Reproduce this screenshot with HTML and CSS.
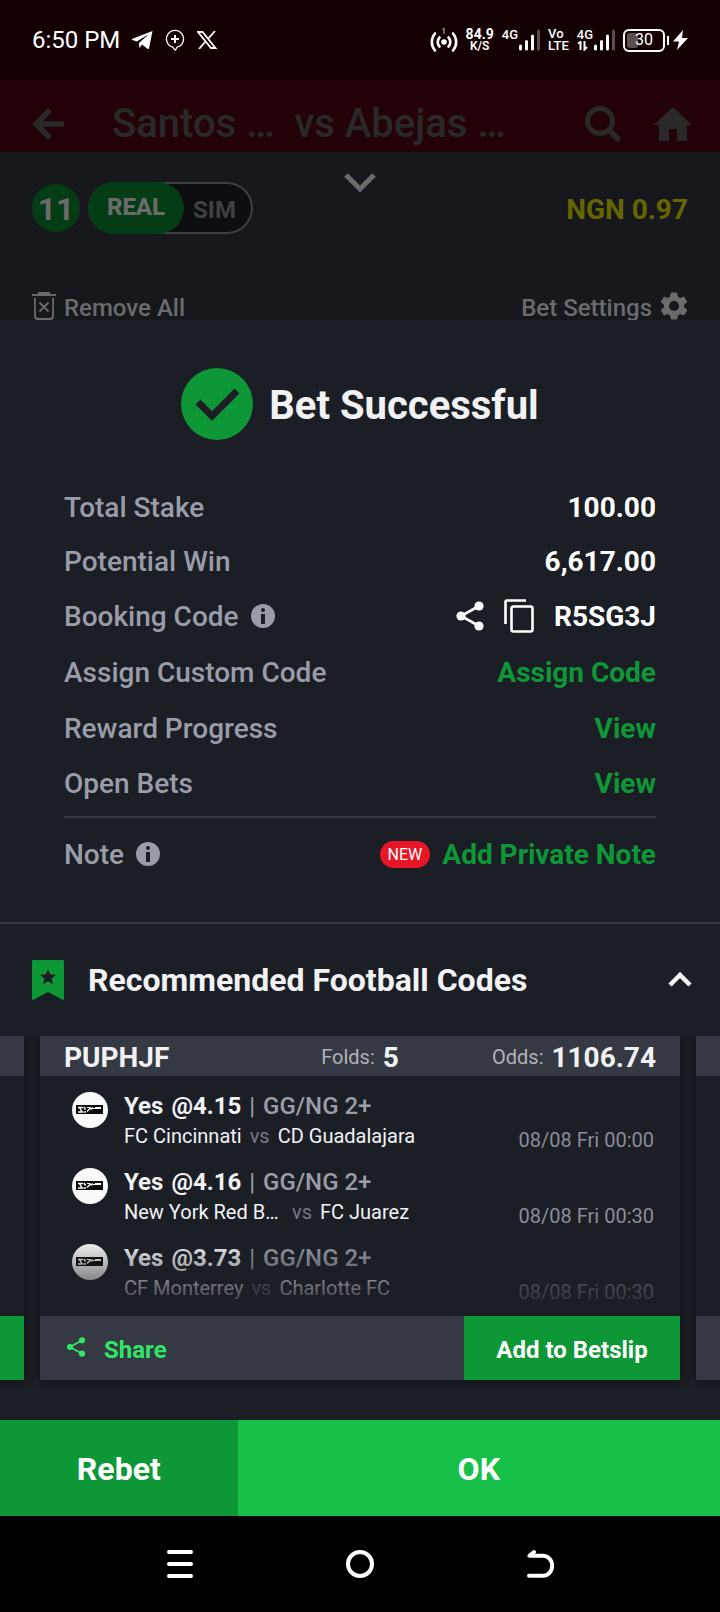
FILE: index.html
```
<!DOCTYPE html>
<html lang="en">
<head>
  <meta charset="UTF-8" />
  <meta name="viewport" content="width=device-width, initial-scale=1" />
  <title>Bet Successful</title>
  <link rel="stylesheet" href="styles.css">
</head>
<body>

<!-- shared icons -->
<svg class="sprite" aria-hidden="true">
  <symbol id="icon-share" viewBox="0 0 28 30">
    <path d="M23 5 5 15l18 10" fill="none" stroke="currentColor" stroke-width="2.6"/>
    <circle cx="23" cy="5" r="4.6" fill="currentColor"/>
    <circle cx="5" cy="15" r="4.6" fill="currentColor"/>
    <circle cx="23" cy="25" r="4.6" fill="currentColor"/>
  </symbol>
  <symbol id="icon-info" viewBox="0 0 24 24">
    <circle cx="12" cy="12" r="12" fill="currentColor"/>
    <circle cx="12" cy="6" r="2" fill="#1c1e26"/>
    <path d="M10 10h4v10h-4z" fill="#1c1e26"/>
  </symbol>
  <symbol id="icon-league" viewBox="0 0 36 36">
    <circle cx="18" cy="18" r="18" fill="#fafafa"/>
    <path d="M4 13h27v9H4z" fill="#0a0a0a"/>
    <path d="M6 15.500h5M6 20h5.500M7.500 15.500l2.500 4.500M12 15l1.500 2.500M15 19.500l4-4M12 20h2M19 17.500l2-2" fill="none" stroke="#fafafa" stroke-width="1.500"/>
    <path d="M15 15.500h3M21 16.500h8M23 15.500h6" fill="none" stroke="#fafafa" stroke-width="1.200"/>
  </symbol>
  <symbol id="icon-signal" viewBox="0 0 22 22">
    <path d="M2.500 17v3M8.500 12.500v7.500M14.500 7v13" stroke="#fff" stroke-width="3" stroke-linecap="round"/>
    <path d="M20.500 2v18" stroke="#5c4f50" stroke-width="3" stroke-linecap="round"/>
  </symbol>
</svg>

<div class="status">
  <div class="status-left">
    <span class="clock">6:50 PM</span>
    <svg width="21" height="18" viewBox="0 0 21 18"><path d="M20.500 0 17 17.500c-.3.700-1 .7-1.600.3L10 13.600l-2.600 3.600-.4-5.200L17 3 4.800 10.500.4 9c-.7-.3-.6-1 .1-1.300z" fill="#fff"/></svg>
    <svg width="20" height="22" viewBox="0 0 20 22"><path d="M8 18.200A8.500 8.500 0 1 1 12 18.200L10.500 21c-.8-.3-1.800-1.300-2.500-2.800z" fill="none" stroke="#fff" stroke-width="1.300"/><path d="M10 6v8M6 10h8" stroke="#fff" stroke-width="2"/></svg>
    <svg width="20" height="18" viewBox="0 0 20 18"><path d="M1 1h4.500L18.500 17H14z" fill="none" stroke="#fff" stroke-width="1.800"/><path d="M18 0 11 8M8.500 10.500 2 18" stroke="#fff" stroke-width="1.800"/></svg>
  </div>
  <div class="status-right">
    <svg width="28" height="26" viewBox="0 0 28 26">
      <circle cx="14" cy="15" r="2.800" fill="#fff"/>
      <path d="M9.500 10.500a6.500 6.500 0 0 0 0 9M18.500 10.500a6.500 6.500 0 0 1 0 9M5 6.500a13 13 0 0 0 0 17M23 6.500a13 13 0 0 1 0 17" fill="none" stroke="#fff" stroke-width="2.600" stroke-linecap="round"/>
      <path d="M12.500 2.500 14 1.500v5.500" fill="none" stroke="#a39a9b" stroke-width="1.200"/>
    </svg>
    <span class="stack"><b>84.9</b><small>K/S</small></span>
    <span class="cell"><span class="gen">4G</span><svg width="22" height="22"><use href="#icon-signal"/></svg></span>
    <span class="stack volte"><span>Vo</span><span>LTE</span></span>
    <span class="cell"><span class="gen">4G<svg width="12" height="10" viewBox="0 0 12 10"><path d="M1 2.500 3.500 1v8M7.500 0v8.500L10 6" fill="none" stroke="#fff" stroke-width="2"/></svg></span><svg width="22" height="22"><use href="#icon-signal"/></svg></span>
    <span class="battery"><span class="battery-level"></span><span class="battery-text">30</span></span>
    <svg width="15" height="20" viewBox="0 0 15 20"><path d="M10 0 0 11.500h6L4 20 15 8H9z" fill="#fff"/></svg>
  </div>
</div>

<header class="match-bar">
  <button class="icon-btn" aria-label="Back">
    <svg width="32" height="32" viewBox="0 0 32 32"><path d="M18 2 4 16l14 14M4 16h28" fill="none" stroke="currentColor" stroke-width="5.500"/></svg>
  </button>
  <h1 class="match-title"><span>Santos …</span><span>vs Abejas …</span></h1>
  <button class="icon-btn" aria-label="Search">
    <svg width="38" height="36" viewBox="0 0 38 36"><circle cx="16" cy="15" r="12.500" fill="none" stroke="currentColor" stroke-width="5"/><path d="m25 24 8.500 8.500" stroke="currentColor" stroke-width="6" stroke-linecap="round"/></svg>
  </button>
  <button class="icon-btn" aria-label="Home">
    <svg width="38" height="34" viewBox="0 0 38 34"><path d="M19 0 38 18h-5v16H23V22h-8v12H5V18H0z" fill="currentColor"/></svg>
  </button>
</header>

<section class="slip">
  <button class="slip-close" aria-label="Close betslip">
    <svg width="32" height="20" viewBox="0 0 32 20"><path d="m2 2 14 14L30 2" fill="none" stroke="currentColor" stroke-width="5"/></svg>
  </button>
  <div class="slip-top">
    <span class="slip-count">11</span>
    <div class="mode">
      <button class="mode-real">REAL</button>
      <button class="mode-sim">SIM</button>
    </div>
    <span class="balance">NGN 0.97</span>
  </div>
  <div class="slip-tools">
    <button class="tool">
      <svg width="24" height="28" viewBox="0 0 24 28"><path d="M6 0h12v2h6v2H0V2h6z" fill="currentColor"/><path d="M3 6v18q0 3 3 3h12q3 0 3-3V6M7.500 10.500l9 9M16.500 10.500l-9 9" fill="none" stroke="currentColor" stroke-width="1.800"/></svg>
      Remove All
    </button>
    <button class="tool">
      Bet Settings
      <svg width="28" height="28" viewBox="2.200 2 19.600 20"><path fill="currentColor" d="M19.140 12.940c.04-.3.060-.61.060-.94 0-.32-.02-.64-.07-.94l2.030-1.580c.18-.14.23-.41.120-.61l-1.920-3.320c-.12-.22-.37-.29-.59-.22l-2.390.96c-.5-.38-1.030-.7-1.620-.94L14.400 2.810c-.04-.24-.24-.41-.48-.41h-3.840c-.24 0-.43.170-.47.410l-.36 2.540c-.59.240-1.130.570-1.620.940l-2.390-.96c-.22-.08-.47 0-.59.220L2.740 8.870c-.12.210-.08.470.12.610l2.030 1.580c-.05.3-.09.630-.09.940s.02.640.070.940l-2.030 1.580c-.18.140-.23.410-.12.610l1.920 3.320c.12.220.37.290.59.220l2.390-.96c.5.380 1.030.7 1.620.940l.36 2.540c.05.240.24.410.48.410h3.840c.24 0 .44-.17.470-.41l.36-2.540c.59-.24 1.130-.56 1.620-.94l2.390.96c.22.080.47 0 .59-.22l1.920-3.320c.12-.22.070-.47-.12-.61zM12 15.600a3.600 3.600 0 1 1 0-7.200 3.600 3.600 0 0 1 0 7.200z"/></svg>
    </button>
  </div>
</section>

<main class="result">
  <h2 class="result-title">
    <svg width="72" height="72" viewBox="0 0 72 72"><circle cx="36" cy="36" r="36" fill="#0e9737"/><path d="m17 34 14 14 25-25" fill="none" stroke="#1c1e26" stroke-width="7"/></svg>
    <span>Bet Successful</span>
  </h2>

  <div class="details">
    <div class="row"><span>Total Stake</span><strong>100.00</strong></div>
    <div class="row"><span>Potential Win</span><strong>6,617.00</strong></div>
    <div class="row tall">
      <span class="label">Booking Code <svg width="24" height="24"><use href="#icon-info"/></svg></span>
      <span class="code">
        <button class="icon-btn" aria-label="Share code"><svg width="28" height="30"><use href="#icon-share"/></svg></button>
        <button class="icon-btn" aria-label="Copy code"><svg width="30" height="34" viewBox="0 0 30 34"><path d="M1.500 25V3q0-1.500 1.500-1.500h19" fill="none" stroke="currentColor" stroke-width="2.600"/><rect x="7.500" y="7.500" width="21" height="25" rx="2" fill="none" stroke="currentColor" stroke-width="2.600"/></svg></button>
        <strong>R5SG3J</strong>
      </span>
    </div>
    <div class="row tall"><span>Assign Custom Code</span><a href="#assign">Assign Code</a></div>
    <div class="row tall"><span>Reward Progress</span><a href="#reward">View</a></div>
    <div class="row"><span>Open Bets</span><a href="#open-bets">View</a></div>
    <div class="row note">
      <span class="label">Note <svg width="24" height="24"><use href="#icon-info"/></svg></span>
      <span class="note-action"><span class="new">NEW</span><a href="#note">Add Private Note</a></span>
    </div>
  </div>

  <section class="codes">
    <div class="codes-head">
      <svg width="32" height="40" viewBox="0 0 32 40"><path d="M1 0h30l1 1v38l-1 1-15-8-15 8-1-1V1z" fill="#0e9737"/><path d="m16 9 2.300 5.300 5.700.5-4.300 3.800 1.300 5.600-5-3-5 3 1.300-5.600L8 14.800l5.700-.5z" fill="#1c1e26"/></svg>
      <h3>Recommended Football Codes</h3>
      <button class="icon-btn" aria-label="Collapse"><svg width="24" height="16" viewBox="0 0 24 16"><path d="m2 13 10-10 10 10" fill="none" stroke="#f2f2f5" stroke-width="4.500"/></svg></button>
    </div>

    <div class="carousel">
      <div class="card">
        <div class="card-head"></div>
        <div class="picks"></div>
        <div class="card-foot"><span class="share"></span><span class="add"></span></div>
      </div>

      <article class="card">
        <div class="card-head">
          <b>PUPHJF</b>
          <span class="stat">Folds: <b>5</b></span>
          <span class="stat">Odds: <b>1106.74</b></span>
        </div>
        <ul class="picks">
          <li class="pick">
            <svg width="36" height="36"><use href="#icon-league"/></svg>
            <div class="pick-info">
              <p class="market"><b>Yes</b> <b>@4.15</b> <i>|</i> <span>GG/NG 2+</span></p>
              <p class="teams"><span>FC Cincinnati</span><i>vs</i><span>CD Guadalajara</span></p>
            </div>
            <time>08/08 Fri 00:00</time>
          </li>
          <li class="pick">
            <svg width="36" height="36"><use href="#icon-league"/></svg>
            <div class="pick-info">
              <p class="market"><b>Yes</b> <b>@4.16</b> <i>|</i> <span>GG/NG 2+</span></p>
              <p class="teams"><span class="cut">New York Red B…</span><i>vs</i><span>FC Juarez</span></p>
            </div>
            <time>08/08 Fri 00:30</time>
          </li>
          <li class="pick">
            <svg width="36" height="36"><use href="#icon-league"/></svg>
            <div class="pick-info">
              <p class="market"><b>Yes</b> <b>@3.73</b> <i>|</i> <span>GG/NG 2+</span></p>
              <p class="teams"><span>CF Monterrey</span><i>vs</i><span>Charlotte FC</span></p>
            </div>
            <time>08/08 Fri 00:30</time>
          </li>
        </ul>
        <div class="card-foot">
          <button class="share"><svg width="20" height="20"><use href="#icon-share"/></svg>Share</button>
          <button class="add">Add to Betslip</button>
        </div>
      </article>

      <div class="card">
        <div class="card-head"></div>
        <div class="picks"></div>
        <div class="card-foot"><span class="share"></span><span class="add"></span></div>
      </div>
    </div>
  </section>
</main>

<div class="actions">
  <button class="rebet">Rebet</button>
  <button class="ok">OK</button>
</div>

<nav class="sysnav">
  <button class="icon-btn" aria-label="Recent apps"><svg width="28" height="30" viewBox="0 0 28 30"><path d="M3 3h22M3 15h22M3 27h22" stroke="#fff" stroke-width="4" stroke-linecap="round"/></svg></button>
  <button class="icon-btn" aria-label="Home screen"><svg width="28" height="30" viewBox="0 0 28 30"><circle cx="14" cy="15" r="12" fill="none" stroke="#fff" stroke-width="4"/></svg></button>
  <button class="icon-btn" aria-label="Go back"><svg width="28" height="30" viewBox="0 0 28 30"><path d="M8 3 3.500 6.800H17a9.200 10 0 0 1 0 20H3" fill="none" stroke="#fff" stroke-width="4" stroke-linecap="round" stroke-linejoin="round"/></svg></button>
</nav>

</body>
</html>
```
FILE: styles.css
```
:root {
  --bg: #1c1e26;
  --panel: #353943;
  --green: #0e9737;
  --ok: #17c149;
  --muted: #9a9ca9;
  --light: #f2f2f5;
  --dim: #6b6b6b;
  --font: Roboto, "Liberation Sans", sans-serif;
}

* {
  box-sizing: border-box;
}

body {
  font-family: var(--font);
  background: var(--bg);
  color: #fff;
  margin: 0;
}

button {
  font: inherit;
  color: inherit;
  background: none;
  border: 0;
  padding: 0;
}

a {
  text-decoration: none;
}

svg {
  display: block;
  flex: none;
}

h1, h2, h3, p, ul {
  margin: 0;
  padding: 0;
}

.sprite {
  position: absolute;
  width: 0;
  height: 0;
}

/* status bar */
.status {
  display: flex;
  justify-content: space-between;
  align-items: center;
  height: 80px;
  padding: 0 32px;
  background: #140000;
}

.status-left,
.status-right {
  display: flex;
  align-items: center;
}

.status-left {
  gap: 12px;
}

.status-right {
  gap: 8px;
}

.clock {
  font-size: 24px;
  line-height: 32px;
}

.stack {
  display: flex;
  flex-direction: column;
  align-items: center;
  font-size: 13px;
  line-height: 12px;
  font-weight: 500;
}

.stack b {
  font-size: 14px;
  font-weight: 700;
}

.stack small {
  font-size: 12px;
  font-weight: 600;
}

.volte {
  align-items: flex-start;
}

.cell {
  display: flex;
  align-items: flex-start;
}

.gen {
  display: flex;
  flex-direction: column;
  align-items: flex-start;
  font-size: 13px;
  line-height: 12px;
  font-weight: 500;
}

.battery {
  position: relative;
  display: flex;
  align-items: center;
  justify-content: center;
  width: 42px;
  height: 23px;
  border: 2px solid #fff;
  border-radius: 6px;
}

.battery::after {
  content: "";
  position: absolute;
  right: -6px;
  top: 5px;
  width: 2px;
  height: 9px;
  background: #fff;
}

.battery-level {
  position: absolute;
  left: 2px;
  top: 2px;
  bottom: 2px;
  width: 30%;
  border-radius: 3px;
  background: #5c4f50;
}

.battery-text {
  position: relative;
  font-size: 16px;
  line-height: 16px;
}

/* match header, behind the dialog */
.match-bar {
  display: flex;
  align-items: center;
  height: 72px;
  padding: 16px 28px 0 32px;
  background: #240308;
  color: #292929;
  overflow: hidden;
}

.match-title {
  display: flex;
  flex: 1;
  gap: 20px;
  margin-left: 48px;
  font-size: 40px;
  line-height: 48px;
  font-weight: 500;
  white-space: nowrap;
}

.match-bar .icon-btn + .icon-btn {
  margin-left: 32px;
}

/* betslip, behind the dialog */
.slip {
  position: relative;
  height: 168px;
  padding: 30px 32px 0;
  background: #17181d;
  color: var(--dim);
  overflow: hidden;
}

.slip-close {
  position: absolute;
  top: 21px;
  left: 50%;
  margin-left: -16px;
}

.slip-top {
  display: flex;
  align-items: center;
  gap: 8px;
}

.slip-count {
  width: 48px;
  height: 48px;
  border-radius: 50%;
  background: #043c16;
  font-size: 32px;
  line-height: 50px;
  font-weight: 700;
  text-align: center;
}

.mode {
  display: flex;
  height: 52px;
  border-radius: 26px;
  background: #0d0e12;
  box-shadow: inset 0 0 0 2px #3f4045;
  font-size: 24px;
  font-weight: 700;
}

.mode-real {
  width: 96px;
  padding-bottom: 2px;
  border-radius: 26px;
  background: #043c16;
  font-weight: 800;
}

.mode-sim {
  width: 69px;
  padding: 4px 8px 0 0;
  color: #3f4045;
}

.balance {
  margin-left: auto;
  padding-top: 2px;
  color: #666600;
  font-size: 28px;
  font-weight: 700;
}

.slip-tools {
  display: flex;
  justify-content: space-between;
  margin-top: 58px;
}

.tool {
  display: flex;
  gap: 8px;
  font-size: 24px;
  line-height: 32px;
  font-weight: 500;
}

/* dialog */
.result-title {
  display: flex;
  justify-content: center;
  align-items: center;
  gap: 16px;
  padding: 48px 0 40px;
  color: var(--light);
  font-size: 40px;
  line-height: 68px;
  font-weight: 700;
}

.result-title span {
  padding-top: 4px;
}

.details {
  padding: 0 64px 32px;
  border-bottom: 2px solid var(--panel);
  font-size: 28px;
  font-weight: 500;
  color: var(--muted);
}

.row {
  display: flex;
  justify-content: space-between;
  align-items: center;
  height: 54px;
}

.row.tall {
  height: 56px;
}

.row strong {
  color: #fff;
  font-weight: 700;
}

.row a {
  color: var(--green);
  font-weight: 700;
}

.row.note {
  height: 74px;
  margin-top: 6px;
  border-top: 2px solid var(--panel);
}

.label,
.code,
.note-action {
  display: flex;
  align-items: center;
  gap: 12px;
}

.code {
  gap: 20px;
  color: #fff;
}

.new {
  height: 27px;
  padding: 0 8px;
  border-radius: 14px;
  background: #e71627;
  color: #fff;
  font-size: 16px;
  line-height: 27px;
  font-weight: 400;
}

/* recommended codes */
.codes {
  padding-bottom: 40px;
}

.codes-head {
  display: flex;
  align-items: center;
  height: 112px;
  padding: 0 28px 0 32px;
  color: var(--light);
}

.codes-head h3 {
  flex: 1;
  margin-left: 24px;
  font-size: 32px;
  font-weight: 700;
}

.carousel {
  display: flex;
  justify-content: center;
  gap: 16px;
  padding-bottom: 8px;
  margin-bottom: -8px;
  overflow: hidden;
}

.card {
  flex: none;
  display: flex;
  flex-direction: column;
  width: calc(100% - 80px);
  box-shadow: 0 2px 8px rgba(0,0,0,0.35);
}

.card-head {
  display: grid;
  grid-template-columns: 1fr auto 1fr;
  align-items: center;
  height: 40px;
  padding: 2px 24px 0;
  background: var(--panel);
  color: var(--light);
  font-size: 28px;
}

.card-head b {
  font-weight: 700;
}

.stat {
  display: flex;
  align-items: center;
  gap: 8px;
  color: #b1b2b8;
  font-size: 20px;
}

.stat:last-child {
  justify-self: end;
}

.stat b {
  color: var(--light);
  font-size: 28px;
}

.picks {
  position: relative;
  flex: 1;
  display: flex;
  flex-direction: column;
  gap: 16px;
  padding: 14px 26px 14px 32px;
  list-style: none;
}

/* last pick fades into the footer */
.picks::after {
  content: "";
  position: absolute;
  left: 0;
  right: 0;
  bottom: 0;
  height: 76px;
  background: linear-gradient(rgba(28,30,38,0), var(--bg));
}

.pick {
  display: flex;
  gap: 16px;
  font-size: 20px;
}

.pick svg {
  margin-top: 2px;
}

.pick-info {
  flex: 1;
}

.market,
.teams {
  display: flex;
  gap: 8px;
}

.market {
  color: var(--muted);
  font-size: 24px;
  line-height: 32px;
}

.market b {
  color: var(--light);
  font-weight: 700;
}

.market span {
  font-weight: 500;
}

.market i,
.teams i {
  font-style: normal;
}

.teams {
  color: var(--light);
  line-height: 28px;
}

.teams i {
  color: #777986;
}

.teams .cut {
  width: 160px;
}

.pick time {
  align-self: flex-end;
  color: #8a8c99;
  line-height: 20px;
}

.card-foot {
  display: flex;
  height: 64px;
  background: var(--panel);
  font-size: 24px;
  font-weight: 700;
}

.share,
.add {
  padding-top: 4px;
}

.share {
  flex: 1;
  display: flex;
  align-items: center;
  gap: 18px;
  padding-left: 26px;
  color: #31e668;
}

.share svg {
  margin-bottom: 6px;
}

.add {
  width: 216px;
  background: var(--green);
  color: #fff;
}

/* bottom buttons */
.actions {
  display: grid;
  grid-template-columns: 33% 1fr;
  height: 96px;
  font-size: 32px;
  font-weight: 700;
}

.actions button {
  padding-top: 2px;
}

.rebet {
  background: var(--green);
}

.ok {
  background: var(--ok);
}

.sysnav {
  display: grid;
  grid-template-columns: 25% 25% 25%;
  justify-content: center;
  justify-items: center;
  align-items: center;
  height: 96px;
  background: #000;
}
```
